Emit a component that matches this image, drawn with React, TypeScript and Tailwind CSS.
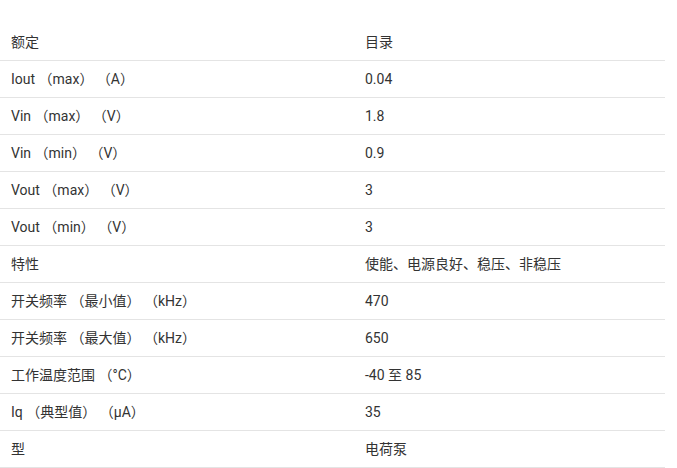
import React from 'react';

const rows: [string, string][] = [
  ['Iout （max） （A）', '0.04'],
  ['Vin （max） （V）', '1.8'],
  ['Vin （min） （V）', '0.9'],
  ['Vout （max） （V）', '3'],
  ['Vout （min） （V）', '3'],
  ['特性', '使能、电源良好、稳压、非稳压'],
  ['开关频率 （最小值） （kHz）', '470'],
  ['开关频率 （最大值） （kHz）', '650'],
  ['工作温度范围 （°C）', '-40 至 85'],
  ['Iq （典型值） （µA）', '35'],
  ['型', '电荷泵'],
];

export default function App() {
  return (
    <div className="w-[677px] h-[468px] bg-white pt-[24px] text-[14px] text-[#333] font-['Roboto','Noto_Sans_CJK_SC',sans-serif]">
      <div className="w-[665px]">
        <div className="flex h-[37px] items-center border-b border-[#e4e4e4]">
          <div className="w-[354px] pl-[11px]">额定</div>
          <div className="flex-1 pl-[11px]">目录</div>
        </div>
        {rows.map(([k, v]) => (
          <div key={k} className="flex h-[37px] items-center border-b border-[#e4e4e4]">
            <div className="w-[354px] pl-[11px]">{k}</div>
            <div className="flex-1 pl-[11px]">{v}</div>
          </div>
        ))}
      </div>
    </div>
  );
}
